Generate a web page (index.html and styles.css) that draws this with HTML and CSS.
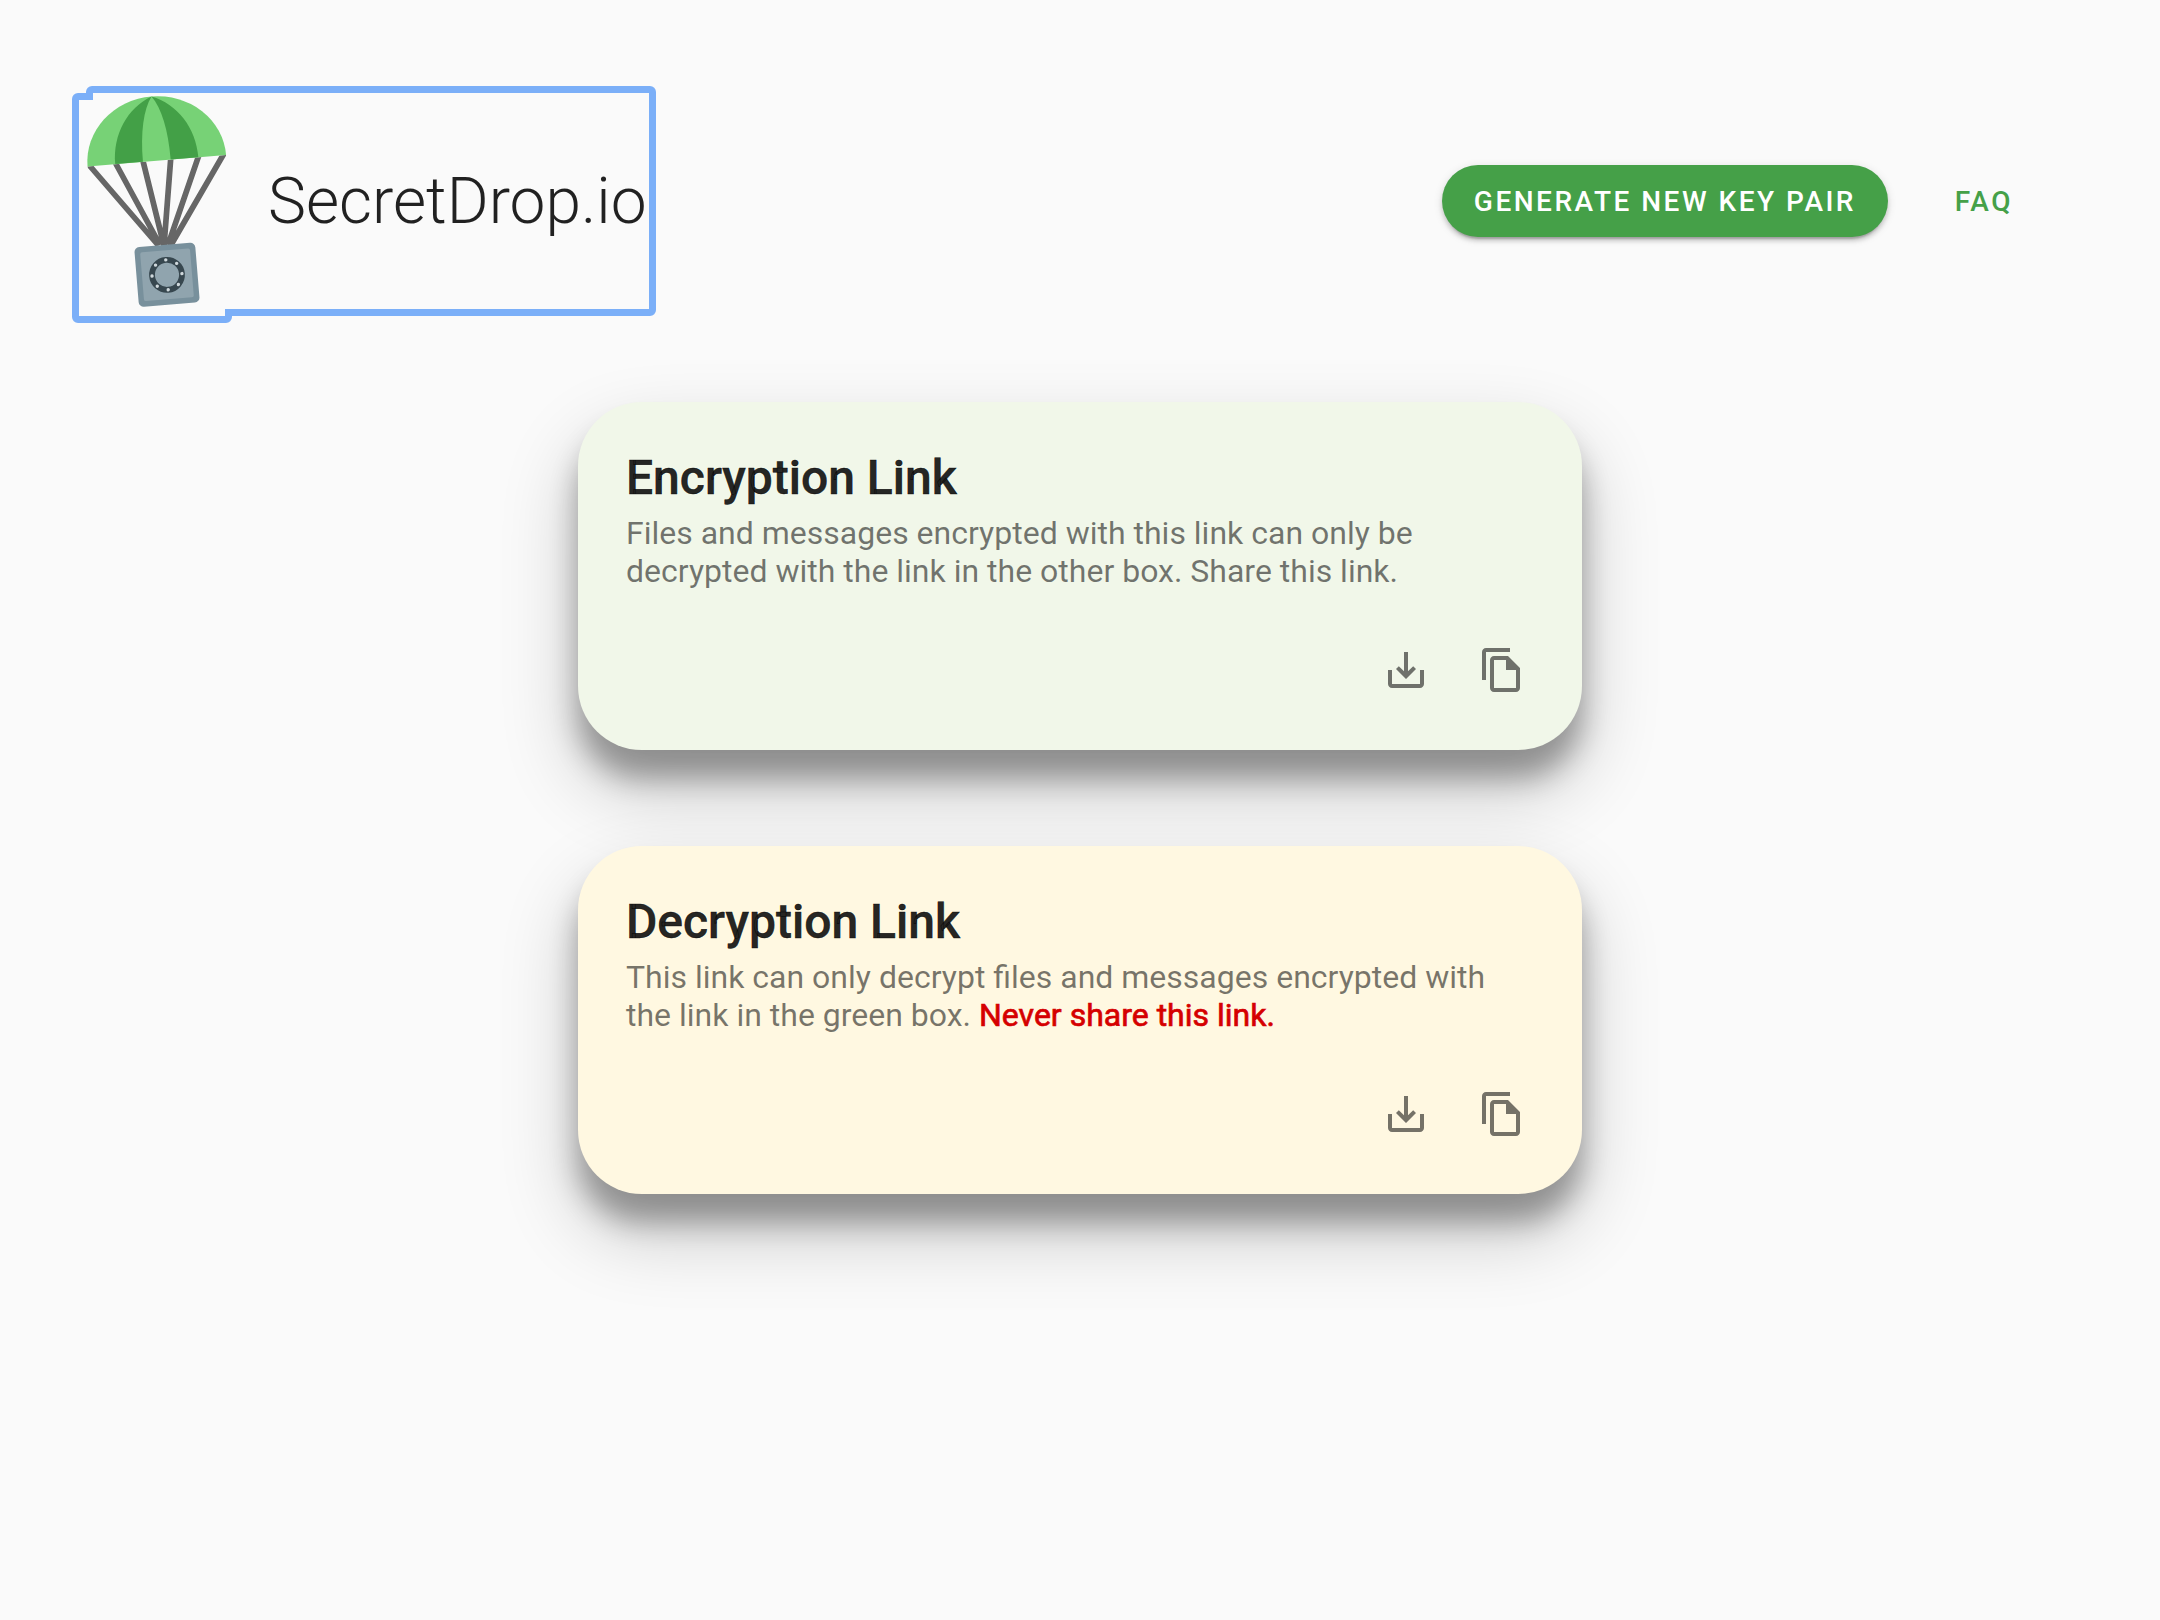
FILE: index.html
```html
<!DOCTYPE html>
<html lang="en">
<head>
<meta charset="utf-8">
<title>SecretDrop.io</title>
<link rel="stylesheet" href="styles.css">
</head>
<body>
<svg class="defs" aria-hidden="true">
  <symbol id="icon-save" viewBox="0 0 24 24"><path d="M19 12v7H5v-7H3v7c0 1.1.9 2 2 2h14c1.1 0 2-.9 2-2v-7h-2zm-6 .67l2.59-2.58L17 11.5l-5 5-5-5 1.41-1.41L11 12.67V3h2v9.67z"/></symbol>
  <symbol id="icon-copy" viewBox="0 0 24 24"><path d="M16 1H4c-1.1 0-2 .9-2 2v14h2V3h12V1zm-1 4H8c-1.1 0-1.99.9-1.99 2L6 21c0 1.1.89 2 1.99 2H19c1.1 0 2-.9 2-2V11l-6-6zM8 21V7h6v5h5v9H8z"/></symbol>
</svg>
<header class="header">
  <a class="brand">
    <svg class="brand-focus" viewBox="72 86 584 237" aria-hidden="true"><path fill-rule="evenodd" d="M78 93H86V92a6 6 0 0 1 6-6H650a6 6 0 0 1 6 6V310a6 6 0 0 1-6 6H232V317a6 6 0 0 1-6 6H78a6 6 0 0 1-6-6V99a6 6 0 0 1 6-6zM79 100H93V93H649V309H225V316H79z"/></svg>
    <svg class="brand-logo" viewBox="72 86 160 237" aria-hidden="true">
      <clipPath id="below"><path d="M87.700 166.400L226 155V260H80z"/></clipPath>
      <g clip-path="url(#below)" fill="none" stroke="#666" stroke-width="5.700">
        <path d="M86 161.500L158 245M113 158.500L160 245M142 157L164 246M171 155L164 246M200 152L168 245M226 150L171 245"/>
      </g>
      <g transform="translate(156.800 160.700) rotate(-4.700)">
        <path fill="#77d276" d="M-69.500 0A69.500 64.500 0 0 1 69.500 0z"/>
        <path fill="#43a047" d="M-41.700 0C-41.700-30-25-55 0-64.500C-9-52-13.900-30-13.900 0zM41.700 0C41.700-30 25-55 0-64.500C9-52 13.900-30 13.900 0z"/>
      </g>
      <g transform="translate(167 274.800) rotate(-4.700)">
        <rect x="-30.500" y="-30" width="61" height="60" rx="5" fill="#78909c"/>
        <rect x="-25" y="-24.500" width="50" height="49" rx="2" fill="#90a4ae"/>
        <circle r="15" fill="none" stroke="#37474f" stroke-width="5.800"/>
        <g fill="#cfd8dc"><circle cy="-15" r="1.700"/><circle cy="15" r="1.700"/><circle cx="-15" r="1.700"/><circle cx="15" r="1.700"/><circle cx="10.600" cy="-10.600" r="1.700"/><circle cx="-10.600" cy="-10.600" r="1.700"/><circle cx="10.600" cy="10.600" r="1.700"/><circle cx="-10.600" cy="10.600" r="1.700"/></g>
      </g>
    </svg>
    <span class="brand-name">SecretDrop.io</span>
  </a>
  <nav class="nav">
    <button class="btn btn-primary">GENERATE NEW KEY PAIR</button>
    <button class="btn btn-text">FAQ</button>
  </nav>
</header>
<main class="cards">
  <section class="card card-green">
    <h2 class="card-title">Encryption Link</h2>
    <p class="card-text">Files and messages encrypted with this link can only be<br>decrypted with the link in the other box. Share this link.</p>
    <div class="card-actions"><svg class="icon"><use href="#icon-save"/></svg><svg class="icon"><use href="#icon-copy"/></svg></div>
  </section>
  <section class="card card-yellow">
    <h2 class="card-title">Decryption Link</h2>
    <p class="card-text">This link can only decrypt files and messages encrypted with<br>the link in the green box. <strong class="warning">Never share this link.</strong></p>
    <div class="card-actions"><svg class="icon"><use href="#icon-save"/></svg><svg class="icon"><use href="#icon-copy"/></svg></div>
  </section>
</main>
</body>
</html>
```
FILE: styles.css
```css
* { box-sizing: border-box; }
body { margin: 0; min-height: 1620px; background: #fafafa; font-family: Roboto, sans-serif; color: rgba(0,0,0,.87); }
.defs { display: none; }
.header { display: flex; justify-content: space-between; align-items: flex-start; padding: 86px 115px 0 72px; height: 402px; }
.brand { position: relative; display: flex; width: 584px; height: 237px; }
.brand-focus { position: absolute; inset: 0; width: 584px; height: 237px; fill: #7baff8; }
.brand-logo { width: 160px; height: 237px; flex: none; }
.brand-name { margin: 77px 0 0 36px; font-size: 64px; font-weight: 300; line-height: 78px; white-space: nowrap; }
.nav { display: flex; gap: 35px; padding-top: 79px; }
.btn { height: 72px; padding: 1px 32px 0; border: 0; border-radius: 36px; font: 500 28px/71px Roboto, sans-serif; letter-spacing: 2.5px; white-space: nowrap; }
.btn-primary { width: 446px; color: #fff; background: #45a048; box-shadow: 0 6px 2px -4px rgba(0,0,0,.2), 0 4px 4px rgba(0,0,0,.14), 0 2px 10px rgba(0,0,0,.12); }
.btn-text { color: #45a048; background: none; }
.cards { display: flex; flex-direction: column; align-items: center; gap: 96px; }
.card { display: flex; flex-direction: column; width: 1004px; height: 348px; padding: 44px 56px 56px 48px; border-radius: 64px; box-shadow: 0 28px 28px rgba(0,0,0,.31), 0 38px 74px 4px rgba(0,0,0,.2); }
.card-green { background: #f1f7e9; }
.card-yellow { background: #fff8e1; }
.card-title { margin: 0; font-size: 48px; font-weight: 500; line-height: 64px; -webkit-text-stroke: .5px; }
.card-text { margin: 4px 0 0; font-size: 32px; line-height: 38px; color: rgba(0,0,0,.54); white-space: nowrap; }
.warning { font-weight: 400; color: #d50000; -webkit-text-stroke: .7px; }
.card-actions { display: flex; justify-content: flex-end; gap: 48px; margin-top: auto; }
.icon { width: 48px; height: 48px; fill: rgba(0,0,0,.54); }
```
